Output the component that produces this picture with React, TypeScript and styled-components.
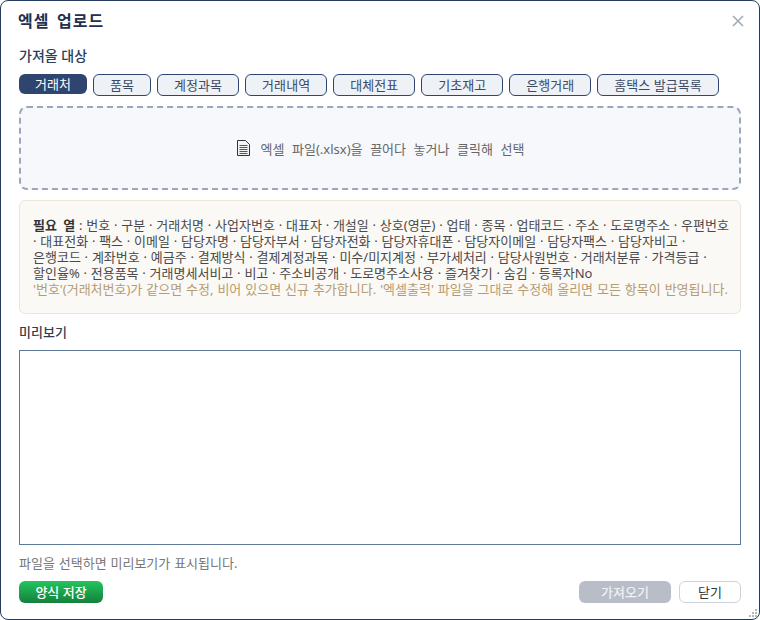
import styled, { createGlobalStyle } from "styled-components"

const GlobalStyle = createGlobalStyle`
    html, body {
        margin: 0;
        padding: 0;
        background: #fff;
    }
    * {
        box-sizing: border-box;
    }
`

const targets = ["거래처", "품목", "계정과목", "거래내역", "대체전표", "기초재고", "은행거래", "홈택스 발급목록"]

const columnLines = [
    "번호 · 구분 · 거래처명 · 사업자번호 · 대표자 · 개설일 · 상호(영문) · 업태 · 종목 · 업태코드 · 주소 · 도로명주소 · 우편번호",
    "· 대표전화 · 팩스 · 이메일 · 담당자명 · 담당자부서 · 담당자전화 · 담당자휴대폰 · 담당자이메일 · 담당자팩스 · 담당자비고 ·",
    "은행코드 · 계좌번호 · 예금주 · 결제방식 · 결제계정과목 · 미수/미지계정 · 부가세처리 · 담당사원번호 · 거래처분류 · 가격등급 ·",
    "할인율% · 전용품목 · 거래명세서비고 · 비고 · 주소비공개 · 도로명주소사용 · 즐겨찾기 · 숨김 · 등록자No",
]

const App = () => {
    return (
        <>
            <GlobalStyle />
            <Dialog>
                <Header>
                    <Title>엑셀 업로드</Title>
                    <CloseButton aria-label="닫기">
                        <svg width="12" height="12" viewBox="0 0 12 12">
                            <path d="M1 1 L11 11 M11 1 L1 11" stroke="#a3aab8" strokeWidth="1.6" fill="none" />
                        </svg>
                    </CloseButton>
                </Header>

                <SectionLabel>가져올 대상</SectionLabel>
                <ChipRow>
                    {targets.map((name, i) => (
                        <Chip key={name} $active={i === 0}>{name}</Chip>
                    ))}
                </ChipRow>

                <DropZone>
                    <svg width="14" height="16" viewBox="0 0 14 16">
                        <path d="M1.5 0.5 H9.5 L13.5 4.5 V15.5 H1.5 Z" fill="#f4f4f4" stroke="#333" strokeWidth="1" />
                        <path d="M3.5 5.5 H11.5 M3.5 7.5 H11.5 M3.5 9.5 H11.5 M3.5 11.5 H11.5 M3.5 13.5 H11.5" stroke="#555" strokeWidth="1" />
                    </svg>
                    <span>엑셀 파일(.xlsx)을 끌어다 놓거나 클릭해 선택</span>
                </DropZone>

                <Notice>
                    <NoticeLine>
                        <strong>필요 열</strong> : {columnLines[0]}
                    </NoticeLine>
                    {columnLines.slice(1).map(line => (
                        <NoticeLine key={line}>{line}</NoticeLine>
                    ))}
                    <NoticeHint>'번호'(거래처번호)가 같으면 수정, 비어 있으면 신규 추가합니다. '엑셀출력' 파일을 그대로 수정해 올리면 모든 항목이 반영됩니다.</NoticeHint>
                </Notice>

                <PreviewLabel>미리보기</PreviewLabel>
                <PreviewBox />
                <HintText>파일을 선택하면 미리보기가 표시됩니다.</HintText>

                <Footer>
                    <SaveButton>양식 저장</SaveButton>
                    <FooterRight>
                        <ImportButton disabled>가져오기</ImportButton>
                        <CloseTextButton>닫기</CloseTextButton>
                    </FooterRight>
                </Footer>

                <Grip width="10" height="10" viewBox="0 0 10 10">
                    <path d="M7 1h2v2H7z M4 4h2v2H4z M7 4h2v2H7z M1 7h2v2H1z M4 7h2v2H4z M7 7h2v2H7z" fill="#b4b8c0" />
                </Grip>
            </Dialog>
        </>
    )
}

export default App

const Dialog = styled.div`
    position: relative;
    display: flex;
    flex-direction: column;
    width: 760px;
    height: 620px;
    padding: 0 18px;
    background: #fff;
    border: 1px solid #263a5e;
    border-radius: 8px;
    overflow: hidden;
    font-family: "Noto Sans", "Noto Sans CJK KR", sans-serif;
    color: #333;
`

const Header = styled.div`
    display: flex;
    align-items: center;
    justify-content: space-between;
    height: 38px;
`

const Title = styled.h1`
    margin: 0 0 0 -1px;
    font-size: 16px;
    font-weight: 600;
    word-spacing: 2px;
    letter-spacing: 1.1px;
    color: #22304d;
`

const CloseButton = styled.button`
    display: flex;
    margin: 2px -3px 0 0;
    padding: 0;
    border: none;
    background: transparent;
    cursor: pointer;
`

const SectionLabel = styled.div`
    margin-top: 7px;
    height: 20px;
    line-height: 20px;
    font-size: 14px;
    font-weight: 500;
    color: #2c3e5c;
`

const ChipRow = styled.div`
    display: flex;
    align-items: flex-start;
    gap: 6px;
    margin-top: 8px;
`

const Chip = styled.button<{ $active?: boolean }>`
    height: ${p => (p.$active ? "20px" : "22px")};
    padding: 0 16px;
    font-family: inherit;
    font-size: 13px;
    font-weight: 400;
    letter-spacing: 0.05px;
    line-height: 1;
    white-space: nowrap;
    border-radius: 6px;
    cursor: pointer;
    border: ${p => (p.$active ? "none" : "1px solid #2f4570")};
    background: ${p => (p.$active ? "#2f4570" : "#eef1f6")};
    color: ${p => (p.$active ? "#fff" : "#3c4a63")};
`

const DropZone = styled.div`
    display: flex;
    align-items: center;
    justify-content: center;
    gap: 11px;
    height: 84px;
    margin-top: 10px;
    background: #f6f8fc;
    border: 2px dashed #9ca6bd;
    border-radius: 8px;
    font-size: 13px;
    word-spacing: 4.2px;
    color: #666;
    cursor: pointer;
`

const Notice = styled.div`
    height: 114px;
    margin-top: 10px;
    padding: 16px 13px 0;
    background: #fbf9f5;
    border: 1px solid #ebe5da;
    border-radius: 6px;
    font-size: 13px;
    line-height: 16px;
    word-spacing: 0.4px;
    color: #4a4a4a;

    strong {
        font-weight: 600;
        word-spacing: 3px;
        color: #333;
    }
`

const NoticeLine = styled.div`
    white-space: nowrap;
`

const NoticeHint = styled(NoticeLine)`
    word-spacing: 0.55px;
    color: #b39c72;
`

const PreviewLabel = styled(SectionLabel)`
    margin-top: 8px;
    font-size: 13px;
    color: #333c4d;
`

const PreviewBox = styled.div`
    height: 195px;
    margin-top: 8px;
    background: #fff;
    border: 1px solid #5f7a99;
`

const HintText = styled.div`
    margin-top: 9px;
    height: 18px;
    line-height: 18px;
    font-size: 13px;
    word-spacing: 0.5px;
    color: #777;
`

const Footer = styled.div`
    display: flex;
    align-items: center;
    justify-content: space-between;
    margin-top: 9px;
`

const FooterRight = styled.div`
    display: flex;
    gap: 8px;
`

const BaseButton = styled.button`
    height: 22px;
    padding: 0;
    font-family: inherit;
    font-size: 13px;
    line-height: 1;
    border-radius: 6px;
    cursor: pointer;
`

const SaveButton = styled(BaseButton)`
    width: 84px;
    border: none;
    background: linear-gradient(180deg, #22c55e, #15803d);
    color: #fff;
    font-weight: 500;
`

const ImportButton = styled(BaseButton)`
    width: 92px;
    border: none;
    background: #b8bdc8;
    color: #eef0f3;
    font-weight: 500;
    cursor: default;
`

const CloseTextButton = styled(BaseButton)`
    width: 62px;
    background: #fff;
    border: 1px solid #cfd2d8;
    color: #333;
`

const Grip = styled.svg`
    position: absolute;
    right: 1px;
    bottom: 1px;
`
